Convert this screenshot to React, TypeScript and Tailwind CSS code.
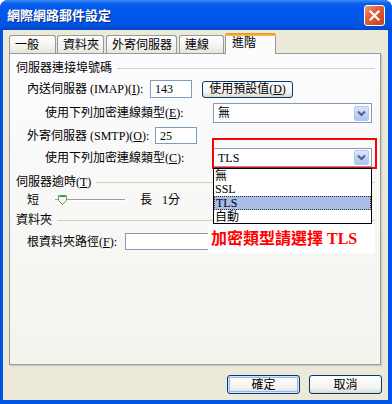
import React from "react";

const F = "font-['Liberation_Serif','Noto_Sans_CJK_TC',serif]";

function Chevron() {
  return (
    <div className="w-[15px] h-[15px] mr-[2px] rounded-[2px] border border-[#b4c7f1] bg-[linear-gradient(180deg,#dbe5fd_0%,#bccffa_60%,#aec4f5_100%)] flex items-center justify-center">
      <svg width="9" height="7" viewBox="0 0 9 7">
        <path d="M1 1.5 L4.5 5 L8 1.5" fill="none" stroke="#4d6185" strokeWidth="2" />
      </svg>
    </div>
  );
}

function Combo({ value, cls }: { value: string; cls: string }) {
  return (
    <div className={"w-[159px] flex items-center justify-between border border-[#7f9db9] bg-white " + cls}>
      <span className="pl-[4px] text-[12px] leading-none text-black">{value}</span>
      <Chevron />
    </div>
  );
}

function GroupHeader({ children }: { children: React.ReactNode }) {
  return (
    <div className="flex items-center h-[14px] pl-[6px] pr-[5px]">
      <span className="text-[12px] leading-none whitespace-nowrap">{children}</span>
      <div className="flex-1 h-px bg-[#d0d0bf] ml-[5px]" />
    </div>
  );
}

function Tab({ label, cls, active }: { label: string; cls: string; active?: boolean }) {
  if (active) {
    return (
      <div className={"relative z-10 h-[21px] -mb-px rounded-t-[3px] border border-b-0 border-[#919b9c] bg-[#fcfcfe] flex flex-col " + cls}>
        <div className="h-[3px] -mx-px -mt-px rounded-t-[3px] bg-[linear-gradient(180deg,#e68b2c_0%,#ffc73c_100%)]" />
        <span className="pl-[6px] pt-[1px] text-[12px] leading-none">{label}</span>
      </div>
    );
  }
  return (
    <div className={"h-[18px] rounded-t-[3px] border border-b-0 border-[#919b9c] bg-[linear-gradient(180deg,#ffffff_0%,#f4f3ee_60%,#e6e4dc_100%)] flex items-center " + cls}>
      <span className="pl-[5px] text-[12px] leading-none">{label}</span>
    </div>
  );
}

function XPButton({ children, cls, def }: { children: React.ReactNode; cls: string; def?: boolean }) {
  return (
    <div
      className={
        "flex items-center justify-center rounded-[3px] border border-[#003c74] bg-[linear-gradient(180deg,#ffffff_0%,#f3f3ef_70%,#dcdad0_100%)] text-[12px] leading-none " +
        (def ? "shadow-[inset_0_0_0_1px_#cee7ff,inset_0_0_0_2px_#98b8ea] " : "") +
        cls
      }
    >
      {children}
    </div>
  );
}

export default function App() {
  return (
    <div className={"w-[392px] h-[404px] bg-white " + F}>
      <div className="w-[392px] h-[404px] flex flex-col rounded-t-[8px] bg-[#0055e5] overflow-hidden">
        {/* title bar */}
        <div className="h-[30px] flex items-center justify-between bg-[linear-gradient(180deg,#3c8ef8_0%,#0a5feb_12%,#0058ee_30%,#0055e5_80%,#0047cc_100%)] pl-[7px] pr-[7px]">
          <span className="font-['Noto_Sans_CJK_TC',sans-serif] text-[13px] font-bold text-white leading-none [text-shadow:1px_1px_0_#0a2a80] pb-[2px]">
            網際網路郵件設定
          </span>
          <div className="w-[21px] h-[21px] rounded-[3px] border border-white bg-[linear-gradient(135deg,#f19a7c_0%,#e35d34_40%,#c3421c_100%)] flex items-center justify-center">
            <svg width="11" height="11" viewBox="0 0 11 11">
              <path d="M1.5 1.5 L9.5 9.5 M9.5 1.5 L1.5 9.5" stroke="white" strokeWidth="2.2" strokeLinecap="square" />
            </svg>
          </div>
        </div>
        {/* body */}
        <div className="flex-1 mx-[3px] mb-[4px] mr-[4px] bg-[#ece9d8] flex flex-col text-black">
          {/* tabs */}
          <div className="flex items-end h-[23px] pt-[3px] pl-[6px] gap-[2px]">
            <Tab label="一般" cls="w-[47px] -mr-px" />
            <Tab label="資料夾" cls="w-[47px]" />
            <Tab label="外寄伺服器" cls="w-[71px]" />
            <Tab label="連線" cls="w-[45px] -mr-[1px]" />
            <Tab label="進階" cls="w-[51px]" active />
          </div>
          {/* panel */}
          <div className="relative ml-[6px] w-[372px] h-[312px] border border-[#919b9c] bg-[linear-gradient(180deg,#fcfcfe_0%,#f4f3ee_100%)] shadow-[1px_1px_0_#d2cfc2,2px_2px_0_#e0ddd0] flex flex-col">
            <div className="mt-[7px]">
              <GroupHeader>伺服器連接埠號碼</GroupHeader>
            </div>
            {/* IMAP row */}
            <div className="mt-[5px] h-[18px] flex items-center pl-[17px]">
              <span className="w-[123px] text-[12px] leading-none whitespace-nowrap">
                內送伺服器 (IMAP)(<u>I</u>):
              </span>
              <div className="w-[42px] h-[18px] border border-[#7f9db9] bg-white flex items-center pl-[4px] text-[12px] leading-none">
                143
              </div>
              <XPButton cls="ml-[10px] w-[91px] h-[17px]">
                使用預設值(<u>D</u>)
              </XPButton>
            </div>
            {/* Enc row 1 */}
            <div className="mt-[5px] h-[20px] flex items-center pl-[35px]">
              <span className="w-[168px] text-[12px] leading-none whitespace-nowrap">
                使用下列加密連線類型(<u>E</u>):
              </span>
              <Combo value="無" cls="h-[20px]" />
            </div>
            {/* SMTP row */}
            <div className="mt-[4px] h-[17px] flex items-center pl-[17px]">
              <span className="w-[128px] text-[12px] leading-none whitespace-nowrap">
                外寄伺服器 (SMTP)(<u>O</u>):
              </span>
              <div className="w-[42px] h-[17px] border border-[#7f9db9] bg-white flex items-center pl-[4px] text-[12px] leading-none">
                25
              </div>
            </div>
            {/* Enc row 2 */}
            <div className="mt-[4px] h-[19px] flex items-center pl-[35px]">
              <span className="w-[168px] text-[12px] leading-none whitespace-nowrap">
                使用下列加密連線類型(<u>C</u>):
              </span>
              <Combo value="TLS" cls="h-[19px]" />
            </div>
            <div className="mt-[8px]">
              <GroupHeader>
                伺服器逾時(<u>T</u>)
              </GroupHeader>
            </div>
            {/* slider row */}
            <div className="mt-[4px] h-[14px] flex items-center pl-[17px]">
              <span className="w-[28px] text-[12px] leading-none">短</span>
              <div className="relative w-[70px] h-[14px] flex items-center">
                <div className="w-full h-[2px] border-t border-[#9d9c99] border-b border-b-white bg-[#d6d3ce]" />
                <svg className="absolute left-[3px] top-[2px]" width="9" height="10" viewBox="0 0 9 10">
                  <path d="M0.5 0.5 H8.5 V5.5 L4.5 9.5 L0.5 5.5 Z" fill="#f4f3ee" stroke="#5aa25a" strokeWidth="1" />
                  <path d="M1.5 1.5 H7.5" stroke="#21a121" strokeWidth="1" />
                </svg>
              </div>
              <span className="ml-[15px] text-[12px] leading-none">長</span>
              <span className="ml-[10px] text-[12px] leading-none">1分</span>
            </div>
            <div className="mt-[6px]">
              <GroupHeader>資料夾</GroupHeader>
            </div>
            {/* root folder row */}
            <div className="mt-[6px] h-[17px] flex items-center pl-[17px]">
              <span className="w-[98px] text-[12px] leading-none whitespace-nowrap">
                根資料夾路徑(<u>F</u>):
              </span>
              <div className="w-[247px] h-[17px] border border-[#7f9db9] bg-white" />
            </div>

            {/* red highlight rectangle */}
            <div className="absolute left-[202px] top-[84px] w-[165px] h-[31px] border-2 border-[#ff0000]" />
            {/* dropdown list */}
            <div className="absolute left-[203px] top-[114px] w-[159px] h-[56px] border border-black bg-white flex flex-col text-[12px] leading-none">
              <div className="h-[13px] flex items-center pl-[1px]">無</div>
              <div className="h-[14px] flex items-center pl-[1px]">SSL</div>
              <div className="h-[14px] flex items-center pl-[1px] bg-[#a9bde6] border border-dotted border-[#333]">TLS</div>
              <div className="h-[13px] flex items-center pl-[1px]">自動</div>
            </div>
            {/* annotation */}
            <div className="absolute left-[198px] top-[170px] w-[167px] h-[29px] bg-white flex items-center pl-[3px]">
              <span className="text-[16px] font-bold leading-none text-[#ff0000] whitespace-nowrap">
                加密類型請選擇 TLS
              </span>
            </div>
          </div>
          {/* buttons */}
          <div className="mt-[10px] flex justify-end gap-[9px] pr-[6px]">
            <XPButton cls="w-[73px] h-[19px]" def>
              確定
            </XPButton>
            <XPButton cls="w-[73px] h-[19px]">取消</XPButton>
          </div>
        </div>
      </div>
    </div>
  );
}
